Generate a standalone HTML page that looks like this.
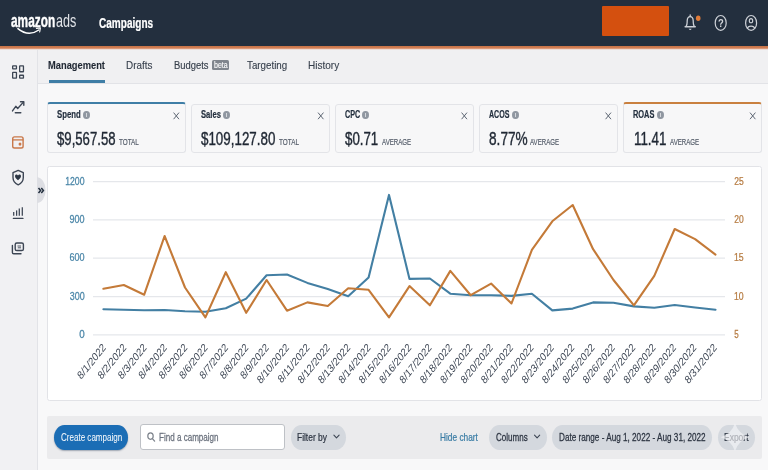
<!DOCTYPE html>
<html lang="en"><head><meta charset="utf-8"><title>Campaigns</title>
<style>
html,body{margin:0;padding:0;}
body{width:768px;height:470px;overflow:hidden;position:relative;background:#f8f8f9;font-family:"Liberation Sans",sans-serif;}
.abs{position:absolute;box-sizing:border-box;}
.t{position:absolute;white-space:nowrap;transform-origin:0 0;display:block;z-index:2;}
#hdr{left:-6px;top:-6px;width:780px;height:52px;background:#232f3e;}
#hline{left:-6px;top:45.5px;width:780px;height:4.6px;background:linear-gradient(to bottom,#c57347 0%,#d07c51 38%,#d98f6b 60%,#ecd2c5 80%,#f0f0f2 100%);}
#tabs{left:-6px;top:48.5px;width:780px;height:35px;background:#f0f0f2;border-bottom:1px solid #e2e3e7;}
#side{left:-6px;top:48.5px;width:43.5px;height:430px;background:#f1f1f3;border-right:1px solid #e2e3e7;}
.card{top:102px;width:138.5px;height:50.5px;background:#f7f7f8;border:1px solid #e3e4e8;border-radius:3px;}
.card.hl{border-top:2.6px solid #3f7ea6;}
.card.ho{border-top:2.6px solid #c9803f;}
#panel{left:47px;top:165.5px;width:714.6px;height:235.8px;background:#fff;border:1px solid #e2e3e7;border-radius:2.5px;}
#tool{left:47px;top:416px;width:714.5px;height:43px;background:#ebebed;border-radius:2px;}
.pill{top:424.5px;height:25.5px;border-radius:10.5px / 12.75px;background:#d4d8de;}
svg{position:absolute;left:0;top:0;overflow:visible;}
#wrap{position:absolute;left:0;top:0;width:768px;height:470px;will-change:transform;filter:blur(0.45px);}
</style></head><body><div id="wrap">

<div class="abs" id="tabs"></div>
<div class="abs" id="side"></div>
<div class="abs" id="hdr"></div><div class="abs" id="hline"></div>
<span class="t" style="left:11.44px;top:10px;font-size:18.5px;line-height:21px;font-weight:700;color:#ffffff;transform:scaleX(0.6418);-webkit-text-stroke:0.43px #ffffff;">amazon</span>
<span class="t" style="left:56.10px;top:10px;font-size:18.5px;line-height:21px;font-weight:400;color:#e2e5e9;transform:scaleX(0.6796);-webkit-text-stroke:0;">ads</span>
<span class="t" style="left:98.60px;top:15px;font-size:14px;line-height:16px;font-weight:700;color:#ffffff;transform:scaleX(0.7170);-webkit-text-stroke:0.23px #ffffff;">Campaigns</span>
<div class="abs" style="left:602px;top:5.8px;width:67px;height:30.4px;background:#d4500f;border-radius:1px;"></div>
<span class="t" style="left:47.89px;top:59px;font-size:11.5px;line-height:12px;font-weight:700;color:#1f2733;transform:scaleX(0.8105);-webkit-text-stroke:0.11px #1f2733;">Management</span>
<div class="abs" style="left:48.5px;top:80px;width:56.3px;height:3.2px;background:#3f7ea6;"></div>
<span class="t" style="left:125.81px;top:59px;font-size:11.5px;line-height:12px;font-weight:400;color:#353e4b;transform:scaleX(0.8593);-webkit-text-stroke:0.12px #353e4b;">Drafts</span>
<span class="t" style="left:173.55px;top:59px;font-size:11.5px;line-height:12px;font-weight:400;color:#353e4b;transform:scaleX(0.8170);-webkit-text-stroke:0.16px #353e4b;">Budgets</span>
<div class="abs" style="left:212.2px;top:59.8px;width:16.8px;height:10px;background:#80858d;border-radius:1.5px;"></div>
<span class="t" style="left:213.54px;top:60px;font-size:8.5px;line-height:10px;font-weight:400;color:#ffffff;transform:scaleX(0.8260);-webkit-text-stroke:0.11px #ffffff;">beta</span>
<span class="t" style="left:246.80px;top:59px;font-size:11.5px;line-height:12px;font-weight:400;color:#353e4b;transform:scaleX(0.8491);-webkit-text-stroke:0.13px #353e4b;">Targeting</span>
<span class="t" style="left:307.70px;top:59px;font-size:11.5px;line-height:12px;font-weight:400;color:#353e4b;transform:scaleX(0.8724);-webkit-text-stroke:0.11px #353e4b;">History</span>
<div class="abs card hl" style="left:47.3px;top:102px;height:50.5px;"></div>
<span class="t" style="left:56.77px;top:108px;font-size:11.2px;line-height:12px;font-weight:700;color:#232f3e;transform:scaleX(0.6938);-webkit-text-stroke:0.2px #232f3e;">Spend</span>
<div class="abs" style="left:83.10px;top:110.85px;width:6.6px;height:7.8px;border-radius:50%;background:#9097a1;"></div>
<div class="abs" style="left:86.05px;top:112.55px;width:0.7px;height:4.4px;background:#d5d8dd;"></div>
<span class="t" style="left:57.37px;top:128px;font-size:18.4px;line-height:21px;font-weight:400;color:#1f2733;transform:scaleX(0.7152);-webkit-text-stroke:0.4px #1f2733;">$9,567.58</span>
<span class="t" style="left:119.07px;top:137px;font-size:9px;line-height:10px;font-weight:400;color:#555d6a;transform:scaleX(0.7053);-webkit-text-stroke:0.2px #555d6a;">TOTAL</span>
<div class="abs card " style="left:191.3px;top:104px;height:48.5px;"></div>
<span class="t" style="left:200.87px;top:108px;font-size:11.2px;line-height:12px;font-weight:700;color:#232f3e;transform:scaleX(0.6819);-webkit-text-stroke:0.2px #232f3e;">Sales</span>
<div class="abs" style="left:222.95px;top:110.85px;width:6.6px;height:7.8px;border-radius:50%;background:#9097a1;"></div>
<div class="abs" style="left:225.90px;top:112.55px;width:0.7px;height:4.4px;background:#d5d8dd;"></div>
<span class="t" style="left:201.37px;top:128px;font-size:18.4px;line-height:21px;font-weight:400;color:#1f2733;transform:scaleX(0.7268);-webkit-text-stroke:0.4px #1f2733;">$109,127.80</span>
<span class="t" style="left:278.87px;top:137px;font-size:9px;line-height:10px;font-weight:400;color:#555d6a;transform:scaleX(0.7071);-webkit-text-stroke:0.2px #555d6a;">TOTAL</span>
<div class="abs card " style="left:335.3px;top:104px;height:48.5px;"></div>
<span class="t" style="left:345.21px;top:108px;font-size:11.2px;line-height:12px;font-weight:700;color:#232f3e;transform:scaleX(0.6462);-webkit-text-stroke:0.2px #232f3e;">CPC</span>
<div class="abs" style="left:362.35px;top:110.85px;width:6.6px;height:7.8px;border-radius:50%;background:#9097a1;"></div>
<div class="abs" style="left:365.30px;top:112.55px;width:0.7px;height:4.4px;background:#d5d8dd;"></div>
<span class="t" style="left:345.37px;top:128px;font-size:18.4px;line-height:21px;font-weight:400;color:#1f2733;transform:scaleX(0.7224);-webkit-text-stroke:0.4px #1f2733;">$0.71</span>
<span class="t" style="left:381.75px;top:137px;font-size:9px;line-height:10px;font-weight:400;color:#555d6a;transform:scaleX(0.6815);-webkit-text-stroke:0.2px #555d6a;">AVERAGE</span>
<div class="abs card " style="left:479.3px;top:104px;height:48.5px;"></div>
<span class="t" style="left:489.32px;top:108px;font-size:11.2px;line-height:12px;font-weight:700;color:#232f3e;transform:scaleX(0.6321);-webkit-text-stroke:0.2px #232f3e;">ACOS</span>
<div class="abs" style="left:511.95px;top:110.85px;width:6.6px;height:7.8px;border-radius:50%;background:#9097a1;"></div>
<div class="abs" style="left:514.90px;top:112.55px;width:0.7px;height:4.4px;background:#d5d8dd;"></div>
<span class="t" style="left:488.95px;top:128px;font-size:18.4px;line-height:21px;font-weight:400;color:#1f2733;transform:scaleX(0.7424);-webkit-text-stroke:0.4px #1f2733;">8.77%</span>
<span class="t" style="left:530.30px;top:137px;font-size:9px;line-height:10px;font-weight:400;color:#555d6a;transform:scaleX(0.6780);-webkit-text-stroke:0.2px #555d6a;">AVERAGE</span>
<div class="abs card ho" style="left:623.3px;top:102px;height:50.5px;"></div>
<span class="t" style="left:633.12px;top:108px;font-size:11.2px;line-height:12px;font-weight:700;color:#232f3e;transform:scaleX(0.6620);-webkit-text-stroke:0.2px #232f3e;">ROAS</span>
<div class="abs" style="left:657.15px;top:110.85px;width:6.6px;height:7.8px;border-radius:50%;background:#9097a1;"></div>
<div class="abs" style="left:660.10px;top:112.55px;width:0.7px;height:4.4px;background:#d5d8dd;"></div>
<span class="t" style="left:633.70px;top:128px;font-size:18.4px;line-height:21px;font-weight:400;color:#1f2733;transform:scaleX(0.7262);-webkit-text-stroke:0.4px #1f2733;">11.41</span>
<span class="t" style="left:669.90px;top:137px;font-size:9px;line-height:10px;font-weight:400;color:#555d6a;transform:scaleX(0.6803);-webkit-text-stroke:0.2px #555d6a;">AVERAGE</span>
<div class="abs" id="panel"></div>
<div class="abs" id="tool"></div>
<div class="abs" style="left:53.7px;top:424.5px;width:74.4px;height:25.5px;border-radius:10.5px / 12.75px;background:#1b6db5;box-shadow:0 1px 1.5px rgba(20,40,70,0.35);"></div>
<span class="t" style="left:60.60px;top:431px;font-size:11.2px;line-height:12px;font-weight:400;color:#f4f8fc;transform:scaleX(0.7186);-webkit-text-stroke:0.05px #f4f8fc;">Create campaign</span>
<div class="abs" style="left:140.2px;top:424.1px;width:144.8px;height:25.8px;border-radius:3px;background:#fff;border:1.2px solid #bec1c6;"></div>
<span class="t" style="left:159.35px;top:431px;font-size:11.2px;line-height:12px;font-weight:400;color:#6a717d;transform:scaleX(0.7204);-webkit-text-stroke:0.27px #6a717d;">Find a campaign</span>
<div class="abs pill" style="left:291px;width:55px;"></div>
<span class="t" style="left:297.33px;top:431px;font-size:11.2px;line-height:12px;font-weight:400;color:#2b3340;transform:scaleX(0.7515);-webkit-text-stroke:0.23px #2b3340;">Filter by</span>
<span class="t" style="left:440.13px;top:431px;font-size:11.2px;line-height:12px;font-weight:400;color:#3a7ca5;transform:scaleX(0.7430);-webkit-text-stroke:0.24px #3a7ca5;">Hide chart</span>
<div class="abs pill" style="left:489.4px;width:57.3px;"></div>
<span class="t" style="left:495.85px;top:431px;font-size:11.2px;line-height:12px;font-weight:400;color:#2b3340;transform:scaleX(0.7182);-webkit-text-stroke:0.28px #2b3340;">Columns</span>
<div class="abs pill" style="left:552px;width:159.75px;"></div>
<span class="t" style="left:558.55px;top:431px;font-size:11.2px;line-height:12px;font-weight:400;color:#2b3340;transform:scaleX(0.7298);-webkit-text-stroke:0.26px #2b3340;">Date range - Aug 1, 2022 - Aug 31, 2022</span>
<div class="abs pill" style="left:717.5px;width:37.5px;"></div>
<span class="t" style="left:723.57px;top:431px;font-size:11.2px;line-height:12px;font-weight:400;color:#2b3340;transform:scaleX(0.7573);-webkit-text-stroke:0.23px #2b3340;">Export</span>
<span class="t" style="left:717.88px;top:18px;font-size:10.3px;line-height:11px;font-weight:700;color:#d3d6db;transform:scaleX(0.9138);-webkit-text-stroke:0;">?</span>
<svg width="768" height="470" viewBox="0 0 768 470" font-family="Liberation Sans, sans-serif">
<line x1="93" x2="725" y1="181.6" y2="181.6" stroke="#e5e7eb" stroke-width="1.25"/>
<line x1="93" x2="725" y1="219.9" y2="219.9" stroke="#e5e7eb" stroke-width="1.25"/>
<line x1="93" x2="725" y1="258.2" y2="258.2" stroke="#e5e7eb" stroke-width="1.25"/>
<line x1="93" x2="725" y1="296.5" y2="296.5" stroke="#e5e7eb" stroke-width="1.25"/>
<line x1="93" x2="725" y1="334.8" y2="334.8" stroke="#e5e7eb" stroke-width="1.25"/>
<text transform="translate(65.14,184.6) scale(0.8252,1)" font-size="10.6" font-weight="400" fill="#4a86a8" stroke="#4a86a8" stroke-width="0.25">1200</text>
<text transform="translate(69.59,222.9) scale(0.8511,1)" font-size="10.6" font-weight="400" fill="#4a86a8" stroke="#4a86a8" stroke-width="0.25">900</text>
<text transform="translate(69.55,261.2) scale(0.8538,1)" font-size="10.6" font-weight="400" fill="#4a86a8" stroke="#4a86a8" stroke-width="0.25">600</text>
<text transform="translate(69.69,299.5) scale(0.8458,1)" font-size="10.6" font-weight="400" fill="#4a86a8" stroke="#4a86a8" stroke-width="0.25">300</text>
<text transform="translate(79.21,337.8) scale(0.9237,1)" font-size="10.6" font-weight="400" fill="#4a86a8" stroke="#4a86a8" stroke-width="0.25">0</text>
<text transform="translate(734.17,184.6) scale(0.8047,1)" font-size="10.6" font-weight="400" fill="#b67b41" stroke="#b67b41" stroke-width="0.25">25</text>
<text transform="translate(734.18,222.9) scale(0.8007,1)" font-size="10.6" font-weight="400" fill="#b67b41" stroke="#b67b41" stroke-width="0.25">20</text>
<text transform="translate(733.94,261.2) scale(0.8249,1)" font-size="10.6" font-weight="400" fill="#b67b41" stroke="#b67b41" stroke-width="0.25">15</text>
<text transform="translate(733.95,299.5) scale(0.8208,1)" font-size="10.6" font-weight="400" fill="#b67b41" stroke="#b67b41" stroke-width="0.25">10</text>
<text transform="translate(734.28,337.8) scale(0.7547,1)" font-size="10.6" font-weight="400" fill="#b67b41" stroke="#b67b41" stroke-width="0.25">5</text>
<polyline points="103.4,309.2 123.8,309.7 144.2,310.2 164.6,310.0 185.0,311.2 205.4,311.8 225.8,308.2 246.2,298.6 266.6,275.3 287.0,274.5 307.4,282.9 327.8,289.0 348.2,296.3 368.6,277.4 389.0,194.9 409.5,278.9 429.9,278.5 450.3,293.7 470.7,295.2 491.1,295.2 511.5,295.9 531.9,293.7 552.3,310.4 572.7,308.6 593.1,302.4 613.5,302.8 633.9,306.4 654.3,307.7 674.7,305.0 695.1,307.5 715.5,309.7" fill="none" stroke="#437fa3" stroke-width="2.1" stroke-linejoin="round" stroke-linecap="round"/>
<polyline points="103.4,288.8 123.8,285.0 144.2,294.7 164.6,236.0 185.0,287.5 205.4,317.4 225.8,272.2 246.2,312.8 266.6,280.0 287.0,310.7 307.4,302.4 327.8,306.0 348.2,288.3 368.6,289.8 389.0,317.3 409.5,286.1 429.9,305.3 450.3,270.9 470.7,295.2 491.1,283.6 511.5,303.5 531.9,249.8 552.3,221.3 572.7,205.0 593.1,249.2 613.5,280.0 633.9,305.3 654.3,275.8 674.7,229.0 695.1,239.1 715.5,254.6" fill="none" stroke="#c47a38" stroke-width="2.1" stroke-linejoin="round" stroke-linecap="round"/>
<text transform="translate(106.40,348.3) scale(0.80,1) rotate(-45)" text-anchor="end" font-size="11.5" fill="#3d4654">8/1/2022</text>
<text transform="translate(126.76,348.3) scale(0.80,1) rotate(-45)" text-anchor="end" font-size="11.5" fill="#3d4654">8/2/2022</text>
<text transform="translate(147.13,348.3) scale(0.80,1) rotate(-45)" text-anchor="end" font-size="11.5" fill="#3d4654">8/3/2022</text>
<text transform="translate(167.49,348.3) scale(0.80,1) rotate(-45)" text-anchor="end" font-size="11.5" fill="#3d4654">8/4/2022</text>
<text transform="translate(187.85,348.3) scale(0.80,1) rotate(-45)" text-anchor="end" font-size="11.5" fill="#3d4654">8/5/2022</text>
<text transform="translate(208.22,348.3) scale(0.80,1) rotate(-45)" text-anchor="end" font-size="11.5" fill="#3d4654">8/6/2022</text>
<text transform="translate(228.58,348.3) scale(0.80,1) rotate(-45)" text-anchor="end" font-size="11.5" fill="#3d4654">8/7/2022</text>
<text transform="translate(248.94,348.3) scale(0.80,1) rotate(-45)" text-anchor="end" font-size="11.5" fill="#3d4654">8/8/2022</text>
<text transform="translate(269.31,348.3) scale(0.80,1) rotate(-45)" text-anchor="end" font-size="11.5" fill="#3d4654">8/9/2022</text>
<text transform="translate(289.67,348.3) scale(0.80,1) rotate(-45)" text-anchor="end" font-size="11.5" fill="#3d4654">8/10/2022</text>
<text transform="translate(310.03,348.3) scale(0.80,1) rotate(-45)" text-anchor="end" font-size="11.5" fill="#3d4654">8/11/2022</text>
<text transform="translate(330.40,348.3) scale(0.80,1) rotate(-45)" text-anchor="end" font-size="11.5" fill="#3d4654">8/12/2022</text>
<text transform="translate(350.76,348.3) scale(0.80,1) rotate(-45)" text-anchor="end" font-size="11.5" fill="#3d4654">8/13/2022</text>
<text transform="translate(371.12,348.3) scale(0.80,1) rotate(-45)" text-anchor="end" font-size="11.5" fill="#3d4654">8/14/2022</text>
<text transform="translate(391.49,348.3) scale(0.80,1) rotate(-45)" text-anchor="end" font-size="11.5" fill="#3d4654">8/15/2022</text>
<text transform="translate(411.85,348.3) scale(0.80,1) rotate(-45)" text-anchor="end" font-size="11.5" fill="#3d4654">8/16/2022</text>
<text transform="translate(432.21,348.3) scale(0.80,1) rotate(-45)" text-anchor="end" font-size="11.5" fill="#3d4654">8/17/2022</text>
<text transform="translate(452.58,348.3) scale(0.80,1) rotate(-45)" text-anchor="end" font-size="11.5" fill="#3d4654">8/18/2022</text>
<text transform="translate(472.94,348.3) scale(0.80,1) rotate(-45)" text-anchor="end" font-size="11.5" fill="#3d4654">8/19/2022</text>
<text transform="translate(493.30,348.3) scale(0.80,1) rotate(-45)" text-anchor="end" font-size="11.5" fill="#3d4654">8/20/2022</text>
<text transform="translate(513.67,348.3) scale(0.80,1) rotate(-45)" text-anchor="end" font-size="11.5" fill="#3d4654">8/21/2022</text>
<text transform="translate(534.03,348.3) scale(0.80,1) rotate(-45)" text-anchor="end" font-size="11.5" fill="#3d4654">8/22/2022</text>
<text transform="translate(554.39,348.3) scale(0.80,1) rotate(-45)" text-anchor="end" font-size="11.5" fill="#3d4654">8/23/2022</text>
<text transform="translate(574.76,348.3) scale(0.80,1) rotate(-45)" text-anchor="end" font-size="11.5" fill="#3d4654">8/24/2022</text>
<text transform="translate(595.12,348.3) scale(0.80,1) rotate(-45)" text-anchor="end" font-size="11.5" fill="#3d4654">8/25/2022</text>
<text transform="translate(615.48,348.3) scale(0.80,1) rotate(-45)" text-anchor="end" font-size="11.5" fill="#3d4654">8/26/2022</text>
<text transform="translate(635.85,348.3) scale(0.80,1) rotate(-45)" text-anchor="end" font-size="11.5" fill="#3d4654">8/27/2022</text>
<text transform="translate(656.21,348.3) scale(0.80,1) rotate(-45)" text-anchor="end" font-size="11.5" fill="#3d4654">8/28/2022</text>
<text transform="translate(676.57,348.3) scale(0.80,1) rotate(-45)" text-anchor="end" font-size="11.5" fill="#3d4654">8/29/2022</text>
<text transform="translate(696.94,348.3) scale(0.80,1) rotate(-45)" text-anchor="end" font-size="11.5" fill="#3d4654">8/30/2022</text>
<text transform="translate(717.30,348.3) scale(0.80,1) rotate(-45)" text-anchor="end" font-size="11.5" fill="#3d4654">8/31/2022</text>
<path d="M173.60 112.6 L179.00 119.2 M179.00 112.6 L173.60 119.2" stroke="#5d6673" stroke-width="1.0" fill="none"/>
<path d="M318.05 112.6 L323.45 119.2 M323.45 112.6 L318.05 119.2" stroke="#5d6673" stroke-width="1.0" fill="none"/>
<path d="M461.60 112.6 L467.00 119.2 M467.00 112.6 L461.60 119.2" stroke="#5d6673" stroke-width="1.0" fill="none"/>
<path d="M605.60 112.6 L611.00 119.2 M611.00 112.6 L605.60 119.2" stroke="#5d6673" stroke-width="1.0" fill="none"/>
<path d="M750.00 112.6 L755.40 119.2 M755.40 112.6 L750.00 119.2" stroke="#5d6673" stroke-width="1.0" fill="none"/>
<rect x="12.65" y="65.80" width="3.80" height="3.05" rx="0.35" fill="none" stroke="#3d4654" stroke-width="1.3"/>
<rect x="12.65" y="72.35" width="3.80" height="5.70" rx="0.35" fill="none" stroke="#3d4654" stroke-width="1.3"/>
<rect x="19.65" y="65.80" width="3.80" height="5.95" rx="0.35" fill="none" stroke="#3d4654" stroke-width="1.3"/>
<rect x="19.65" y="75.25" width="3.80" height="2.80" rx="0.35" fill="none" stroke="#3d4654" stroke-width="1.3"/>
<polyline points="12.5,110.9 15.8,106.3 17.7,108.5 23.4,102.1" fill="none" stroke="#3d4654" stroke-width="1.4" stroke-linecap="round" stroke-linejoin="round"/>
<polyline points="20.5,101.7 23.8,101.7 23.8,105.2" fill="none" stroke="#3d4654" stroke-width="1.4" stroke-linecap="round" stroke-linejoin="round"/>
<line x1="15.3" x2="20.8" y1="112.8" y2="112.8" stroke="#3d4654" stroke-width="1.4" stroke-linecap="round"/>
<rect x="12.70" y="136.90" width="10.40" height="11.10" rx="1.8" fill="none" stroke="#c9784a" stroke-width="1.4"/>
<line x1="12.6" x2="23.2" y1="139.9" y2="139.9" stroke="#c9784a" stroke-width="1.3"/>
<ellipse cx="20" cy="144.1" rx="1.45" ry="1.7" fill="#c9784a"/>
<path d="M18.2 170.4 L23.3 172.7 L23.3 177.6 C23.3 181.3 20.8 183.7 18.2 184.8 C15.6 183.7 13.0 181.3 13.0 177.6 L13.0 172.7 Z" fill="none" stroke="#3d4654" stroke-width="1.4" stroke-linejoin="round"/>
<path d="M18 180.3 C16.4 179.1 15.0 177.8 15.0 176.1 C15.0 174.3 17.0 173.8 18 175.4 C19.0 173.8 21.0 174.3 21.0 176.1 C21.0 177.8 19.6 179.1 18 180.3 Z" fill="#2c3644"/>
<line x1="13.7" x2="13.7" y1="212.0" y2="215.8" stroke="#3d4654" stroke-width="1.25"/>
<line x1="16.6" x2="16.6" y1="210.4" y2="215.8" stroke="#3d4654" stroke-width="1.25"/>
<line x1="19.3" x2="19.3" y1="208.5" y2="215.8" stroke="#3d4654" stroke-width="1.25"/>
<line x1="22.3" x2="22.3" y1="207.3" y2="215.8" stroke="#3d4654" stroke-width="1.25"/>
<line x1="13.4" x2="22.9" y1="218.4" y2="218.4" stroke="#3d4654" stroke-width="1.4" stroke-linecap="round"/>
<rect x="15.20" y="242.95" width="8.20" height="7.55" rx="1.6" fill="none" stroke="#3d4654" stroke-width="1.4"/>
<line x1="17.5" x2="21" y1="246.0" y2="246.0" stroke="#3d4654" stroke-width="0.9"/>
<line x1="17.8" x2="21" y1="247.8" y2="247.8" stroke="#3d4654" stroke-width="0.9"/>
<path d="M12.4 245.5 L12.4 252.4 Q12.4 253.7 13.7 253.7 L21.0 253.7" fill="none" stroke="#3d4654" stroke-width="1.4" stroke-linecap="round"/>
<path d="M37 177.3 A8.6 12.9 0 0 1 37 203.1 Z" fill="#dddee3"/>
<path d="M38.5 188.0 L40.6 190.5 L38.5 193.0 M41.3 188.0 L43.4 190.5 L41.3 193.0" fill="none" stroke="#232f3e" stroke-width="1.5" stroke-linejoin="miter"/>
<path d="M686.1 26.3 C687.5 24.4 687.0 22.6 687.2 20.6 C687.4 18.0 688.6 16.7 690.2 16.7 C691.8 16.7 693.0 18.0 693.2 20.6 C693.4 22.6 692.9 24.4 694.3 26.3" fill="none" stroke="#cdd1d7" stroke-width="1.3"/>
<line x1="685.2" x2="695.2" y1="26.8" y2="26.8" stroke="#cdd1d7" stroke-width="1.6" stroke-linecap="round"/>
<line x1="690.2" x2="690.2" y1="15.0" y2="16.6" stroke="#cdd1d7" stroke-width="1.3" stroke-linecap="round"/>
<path d="M688.7 28.8 Q690.2 31.2 691.7 28.8 Z" fill="#cdd1d7"/>
<ellipse cx="698.2" cy="18.2" rx="2.3" ry="2.7" fill="#e07b39"/>
<ellipse cx="720.7" cy="22.9" rx="5.5" ry="7.4" fill="none" stroke="#cdd1d7" stroke-width="1.2"/>
<ellipse cx="751.1" cy="22.9" rx="5.5" ry="7.4" fill="none" stroke="#cdd1d7" stroke-width="1.2"/>
<ellipse cx="751" cy="20.7" rx="1.7" ry="2.1" fill="none" stroke="#cdd1d7" stroke-width="1.1"/>
<path d="M747.3 28.6 C748 25.2 754 25.2 754.8 28.6" fill="none" stroke="#cdd1d7" stroke-width="1.2"/>
<path d="M17.9 28.6 Q28.5 37.2 38.8 30.0" fill="none" stroke="#ffffff" stroke-width="1.5" stroke-linecap="round"/>
<path d="M36.4 28.4 L40.4 27.9 L39.7 32.0" fill="none" stroke="#ffffff" stroke-width="1.1" stroke-linejoin="round" stroke-linecap="round"/>
<ellipse cx="150.5" cy="436.1" rx="2.7" ry="3.2" fill="none" stroke="#7d838c" stroke-width="1.2"/>
<line x1="152.4" x2="154.6" y1="438.6" y2="441.1" stroke="#7d838c" stroke-width="1.3" stroke-linecap="round"/>
<polyline points="333.9,435.2 336.5,437.8 339.1,435.2" fill="none" stroke="#3d4654" stroke-width="1.1" stroke-linecap="round" stroke-linejoin="round"/>
<polyline points="534.5,435.2 537.1,437.8 539.7,435.2" fill="none" stroke="#3d4654" stroke-width="1.1" stroke-linecap="round" stroke-linejoin="round"/>
</svg>
<svg width="768" height="470" viewBox="0 0 768 470" style="z-index:3"><path d="M735 423.1 Q738.4 434.2 749.3 437.2 Q738.4 440.2 735 451.2 Q731.6 440.2 720.6 437.2 Q731.6 434.2 735 423.1 Z" fill="#f5f5f7" fill-opacity="0.66"/></svg>
</div></body></html>
